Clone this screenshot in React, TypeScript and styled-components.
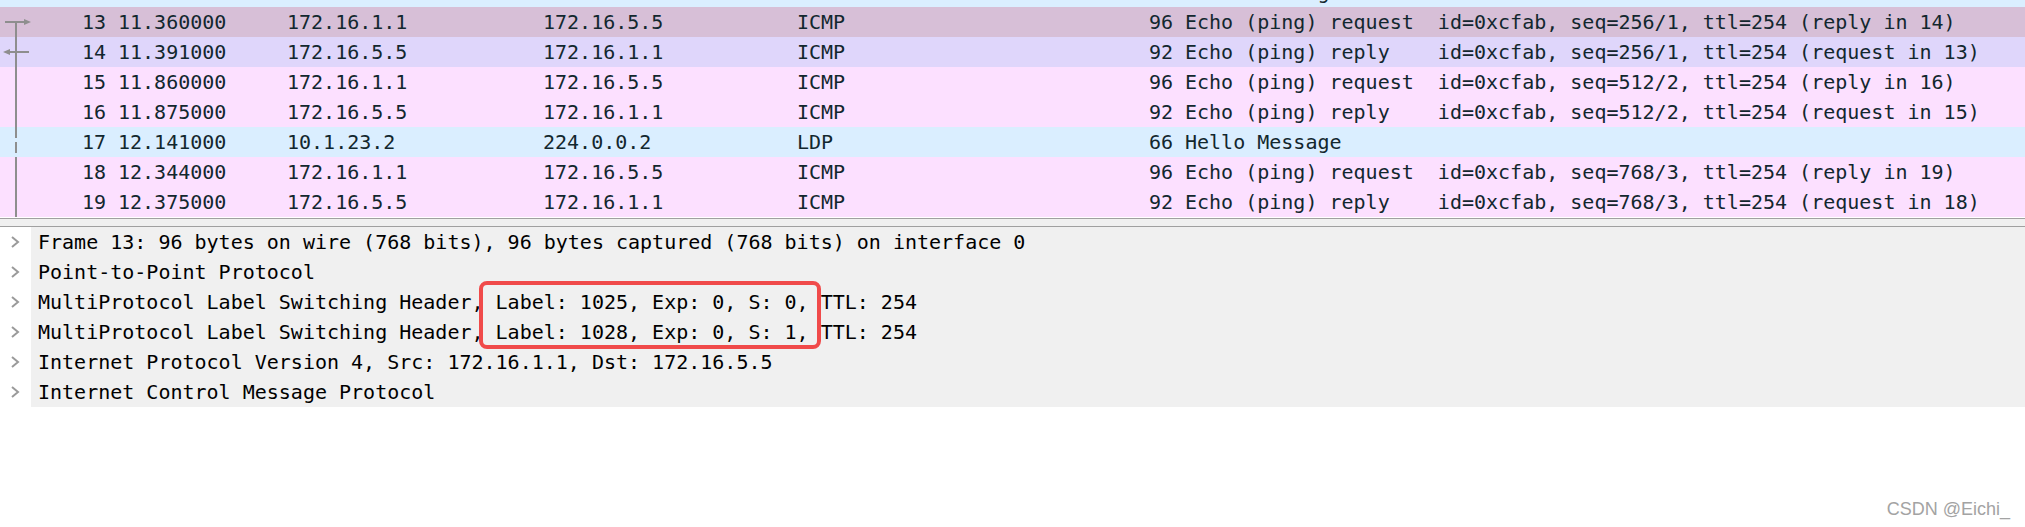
import React from "react";
import styled, { createGlobalStyle } from "styled-components";

const GlobalStyle = createGlobalStyle`
  html, body {
    margin: 0;
    padding: 0;
    background: #ffffff;
  }
  body {
    width: 2025px;
    height: 527px;
    overflow: hidden;
    font-family: "DejaVu Sans Mono", "Liberation Mono", monospace;
  }
`;

type Mark = "none" | "start" | "reply" | "line" | "dashed";

interface Packet {
  no: number;
  time: string;
  src: string;
  dst: string;
  proto: string;
  len: number;
  info: string;
  bg: string;
  mark: Mark;
}

const ICMP_BG = "#fce0ff";
const LDP_BG = "#daeeff";

const packets: Packet[] = [
  { no: 12, time: "11.156000", src: "10.1.23.2", dst: "224.0.0.2", proto: "LDP", len: 66, info: "Hello Message", bg: LDP_BG, mark: "none" },
  { no: 13, time: "11.360000", src: "172.16.1.1", dst: "172.16.5.5", proto: "ICMP", len: 96, info: "Echo (ping) request  id=0xcfab, seq=256/1, ttl=254 (reply in 14)", bg: "#d7bfd7", mark: "start" },
  { no: 14, time: "11.391000", src: "172.16.5.5", dst: "172.16.1.1", proto: "ICMP", len: 92, info: "Echo (ping) reply    id=0xcfab, seq=256/1, ttl=254 (request in 13)", bg: "#dfd6fb", mark: "reply" },
  { no: 15, time: "11.860000", src: "172.16.1.1", dst: "172.16.5.5", proto: "ICMP", len: 96, info: "Echo (ping) request  id=0xcfab, seq=512/2, ttl=254 (reply in 16)", bg: ICMP_BG, mark: "line" },
  { no: 16, time: "11.875000", src: "172.16.5.5", dst: "172.16.1.1", proto: "ICMP", len: 92, info: "Echo (ping) reply    id=0xcfab, seq=512/2, ttl=254 (request in 15)", bg: ICMP_BG, mark: "line" },
  { no: 17, time: "12.141000", src: "10.1.23.2", dst: "224.0.0.2", proto: "LDP", len: 66, info: "Hello Message", bg: LDP_BG, mark: "dashed" },
  { no: 18, time: "12.344000", src: "172.16.1.1", dst: "172.16.5.5", proto: "ICMP", len: 96, info: "Echo (ping) request  id=0xcfab, seq=768/3, ttl=254 (reply in 19)", bg: ICMP_BG, mark: "line" },
  { no: 19, time: "12.375000", src: "172.16.5.5", dst: "172.16.1.1", proto: "ICMP", len: 92, info: "Echo (ping) reply    id=0xcfab, seq=768/3, ttl=254 (request in 18)", bg: ICMP_BG, mark: "line" },
];

const details: string[] = [
  "Frame 13: 96 bytes on wire (768 bits), 96 bytes captured (768 bits) on interface 0",
  "Point-to-Point Protocol",
  "MultiProtocol Label Switching Header, Label: 1025, Exp: 0, S: 0, TTL: 254",
  "MultiProtocol Label Switching Header, Label: 1028, Exp: 0, S: 1, TTL: 254",
  "Internet Protocol Version 4, Src: 172.16.1.1, Dst: 172.16.5.5",
  "Internet Control Message Protocol",
];

const Page = styled.div`
  position: relative;
  width: 2025px;
  height: 527px;
  background: #ffffff;
  display: flex;
  flex-direction: column;
`;

const PacketList = styled.div`
  height: 218px;
  overflow: hidden;
  border-bottom: 1px solid #a0a0a0;
  background: #ffffff;
`;

const PacketRows = styled.div`
  margin-top: -23px;
  display: flex;
  flex-direction: column;
`;

const PacketRow = styled.div<{ $bg: string }>`
  display: grid;
  grid-template-columns: 112px 169px 256px 254px 309px 79px 1fr;
  height: 30px;
  line-height: 30px;
  font-size: 20px;
  color: #12272e;
  background: ${(p) => p.$bg};
  white-space: pre;
`;

const NoCell = styled.div`
  display: flex;
  align-items: center;
  padding-right: 6px;
`;

const NoText = styled.span`
  margin-left: auto;
`;

const Cell = styled.div<{ $right?: boolean }>`
  padding: ${(p) => (p.$right ? "0 6px 0 0" : "0 0 0 6px")};
  text-align: ${(p) => (p.$right ? "right" : "left")};
  overflow: hidden;
`;

const Splitter = styled.div`
  height: 7px;
  background: #f0f0f0;
`;

const DetailsPane = styled.div`
  position: relative;
  flex: 1;
  border-top: 1px solid #a0a0a0;
  background: #ffffff;
  display: flex;
  flex-direction: column;
`;

const DetailRow = styled.div`
  display: flex;
  height: 30px;
`;

const ChevronCell = styled.div`
  width: 31px;
  display: flex;
  align-items: center;
  justify-content: flex-start;
  padding-left: 10px;
  box-sizing: border-box;
  background: #ffffff;
`;

const DetailText = styled.div`
  flex: 1;
  background: #f0f0f0;
  padding-left: 7px;
  font-size: 20px;
  line-height: 30px;
  color: #000000;
  white-space: pre;
`;

const Highlight = styled.div`
  position: absolute;
  left: 479px;
  top: 54px;
  width: 342px;
  height: 68px;
  box-sizing: border-box;
  border: 4px solid #f04a4a;
  border-radius: 8px;
  pointer-events: none;
`;

const Watermark = styled.div`
  position: absolute;
  right: 15px;
  top: 500px;
  font-family: "Liberation Sans", Arial, sans-serif;
  font-size: 18px;
  line-height: 18px;
  color: #a3a3a3;
`;

const LINE = "#8e8e8e";

function RelationMark({ mark }: { mark: Mark }) {
  if (mark === "none") return <svg width="34" height="30" />;
  return (
    <svg width="34" height="30" viewBox="0 0 34 30">
      {mark === "start" && (
        <>
          <line x1="16" y1="15" x2="16" y2="30" stroke={LINE} strokeWidth="2" />
          <line x1="5" y1="15" x2="26" y2="15" stroke={LINE} strokeWidth="2" />
          <polygon points="31,15 24,12 24,18" fill={LINE} />
        </>
      )}
      {mark === "reply" && (
        <>
          <line x1="16" y1="0" x2="16" y2="30" stroke={LINE} strokeWidth="2" />
          <line x1="8" y1="15" x2="29" y2="15" stroke={LINE} strokeWidth="2" />
          <polygon points="3,15 10,12 10,18" fill={LINE} />
        </>
      )}
      {mark === "line" && <line x1="16" y1="0" x2="16" y2="30" stroke={LINE} strokeWidth="2" />}
      {mark === "dashed" && (
        <line x1="16" y1="0" x2="16" y2="30" stroke={LINE} strokeWidth="2" strokeDasharray="11 4" />
      )}
    </svg>
  );
}

function Chevron() {
  return (
    <svg width="10" height="12" viewBox="0 0 10 12">
      <polyline points="2,1 8,6 2,11" fill="none" stroke="#9a9a9a" strokeWidth="2" />
    </svg>
  );
}

export default function App() {
  return (
    <>
      <GlobalStyle />
      <Page>
        <PacketList>
          <PacketRows>
            {packets.map((p) => (
              <PacketRow key={p.no} $bg={p.bg}>
                <NoCell>
                  <RelationMark mark={p.mark} />
                  <NoText>{p.no}</NoText>
                </NoCell>
                <Cell>{p.time}</Cell>
                <Cell>{p.src}</Cell>
                <Cell>{p.dst}</Cell>
                <Cell>{p.proto}</Cell>
                <Cell $right>{p.len}</Cell>
                <Cell>{p.info}</Cell>
              </PacketRow>
            ))}
          </PacketRows>
        </PacketList>
        <Splitter />
        <DetailsPane>
          {details.map((d) => (
            <DetailRow key={d}>
              <ChevronCell>
                <Chevron />
              </ChevronCell>
              <DetailText>{d}</DetailText>
            </DetailRow>
          ))}
          <Highlight />
        </DetailsPane>
        <Watermark>CSDN @Eichi_</Watermark>
      </Page>
    </>
  );
}
